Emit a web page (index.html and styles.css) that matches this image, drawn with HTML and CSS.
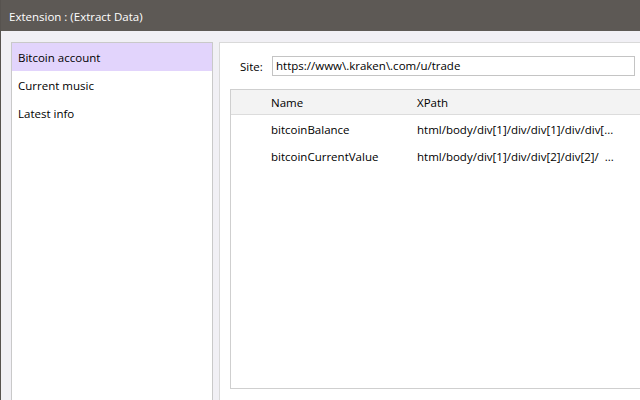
FILE: index.html
```html
<!DOCTYPE html>
<html>
<head>
<meta charset="utf-8">
<link rel="stylesheet" href="styles.css">
</head>
<body>
<div class="window">
  <div class="titlebar">Extension : (Extract Data)</div>
  <div class="main">
    <ul class="list">
      <li class="item selected">Bitcoin account</li>
      <li class="item">Current music</li>
      <li class="item">Latest info</li>
    </ul>
    <div class="panel">
      <div class="site-row">
        <label class="site-label">Site:</label>
        <div class="site-input">https://www\.kraken\.com/u/trade</div>
      </div>
      <div class="table">
        <div class="row header">
          <div class="cell c-name">Name</div>
          <div class="cell c-xpath">XPath</div>
        </div>
        <div class="row">
          <div class="cell c-name">bitcoinBalance</div>
          <div class="cell c-xpath">html/body/div[1]/div/div[1]/div/div[...</div>
        </div>
        <div class="row">
          <div class="cell c-name">bitcoinCurrentValue</div>
          <div class="cell c-xpath">html/body/div[1]/div/div[2]/div[2]/&nbsp; ...</div>
        </div>
      </div>
    </div>
  </div>
</div>
</body>
</html>
```
FILE: styles.css
```css
html, body {
  margin: 0;
  padding: 0;
  width: 640px;
  height: 400px;
  overflow: hidden;
}
body {
  font-family: "Open Sans", "Noto Sans", sans-serif;
  font-size: 11.5px;
  color: #000;
  background: #f1f0f5;
}
.window {
  height: 400px;
  display: flex;
  flex-direction: column;
  border-left: 1px solid #57534f;
}
.titlebar {
  height: 31px;
  flex: none;
  background: #5d5955;
  color: #fff;
  display: flex;
  align-items: center;
  padding-left: 8px;
  padding-top: 1px;
  box-sizing: border-box;
}
.main {
  flex: 1;
  display: flex;
  gap: 6px;
  padding: 11px 0 0 10px;
  min-height: 0;
}
.list {
  list-style: none;
  margin: 0;
  padding: 0;
  width: 200px;
  flex: none;
  background: #fff;
  border: 1px solid #c9c9c9;
  border-bottom: none;
}
.item {
  height: 28px;
  line-height: 28px;
  padding: 1px 0 0 6px;
  box-sizing: border-box;
}
.item.selected {
  background: #e2d4fc;
}
.panel {
  flex: 1;
  background: #fff;
  border-top: 1px solid #d9d9d9;
  border-left: 1px solid #d9d9d9;
  padding: 13px 0 0 10px;
  display: flex;
  flex-direction: column;
  min-width: 0;
}
.site-row {
  display: flex;
  align-items: center;
  padding-left: 10px;
}
.site-label {
  width: 32px;
  flex: none;
}
.site-input {
  width: 358px;
  height: 18px;
  line-height: 18px;
  border: 1px solid #c4c4c4;
  padding-left: 3px;
  white-space: nowrap;
}
.table {
  margin-top: 13px;
  height: 298px;
  border: 1px solid #cfcfcf;
  border-right: none;
  margin-right: -20px;
}
.row {
  display: flex;
  height: 27px;
  align-items: center;
}
.row.header {
  height: 25px;
  padding-top: 1px;
  box-sizing: border-box;
  background: #f3f3f3;
  border-bottom: 1px solid #dcdcdc;
  margin-bottom: 1px;
}
.cell {
  white-space: nowrap;
}
.c-name {
  width: 146px;
  padding-left: 40px;
}
.c-xpath {
  flex: 1;
}
```
